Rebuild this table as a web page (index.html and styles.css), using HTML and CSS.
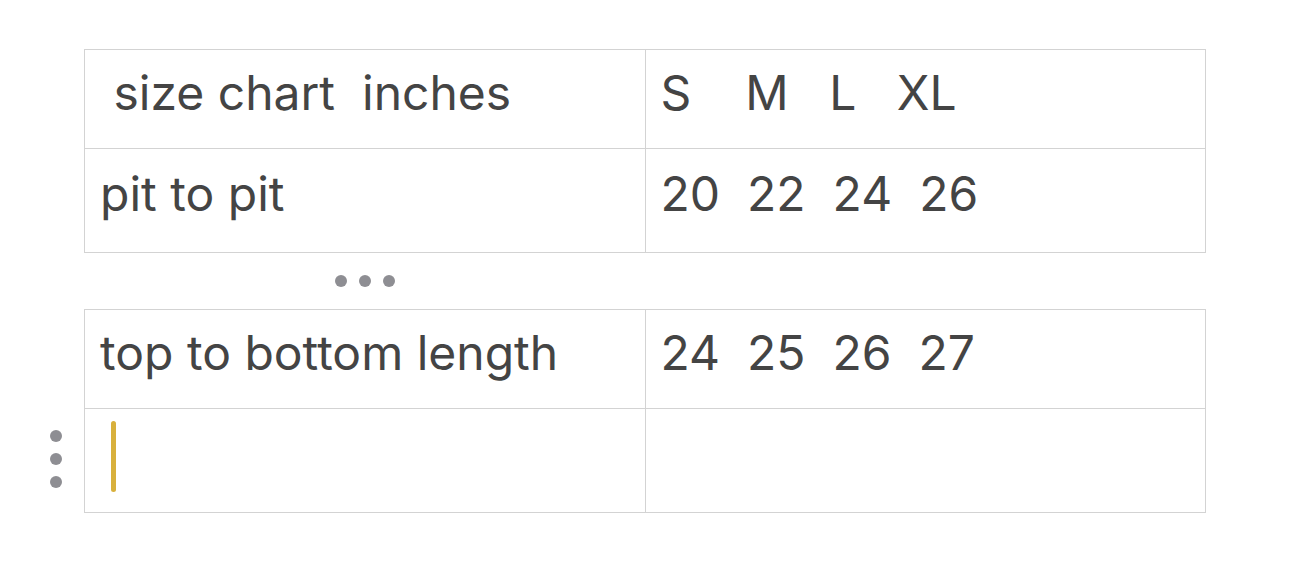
FILE: index.html
```html
<!DOCTYPE html>
<html>
<head>
<meta charset="utf-8">
<link rel="stylesheet" href="styles.css">
</head>
<body>
<main class="page">
  <table class="chart">
    <tr class="row row-a">
      <td class="cell"><span class="txt"> size chart  inches</span></td>
      <td class="cell"><span class="txt">S    M   L   XL</span></td>
    </tr>
    <tr class="row row-b">
      <td class="cell"><span class="txt">pit to pit</span></td>
      <td class="cell"><span class="txt">20  22  24  26</span></td>
    </tr>
  </table>
  <div class="more"><span class="dot"></span><span class="dot"></span><span class="dot"></span></div>
  <table class="chart">
    <tr class="row row-a">
      <td class="cell"><span class="txt">top to bottom length</span></td>
      <td class="cell"><span class="txt">24  25  26  27</span></td>
    </tr>
    <tr class="row row-b">
      <td class="cell cell-active"><span class="handle"><span class="dot"></span><span class="dot"></span><span class="dot"></span></span><span class="caret"></span></td>
      <td class="cell"></td>
    </tr>
  </table>
</main>
</body>
</html>
```

FILE: styles.css
```css
html, body {
  margin: 0;
  background: #ffffff;
}
.page {
  padding: 49px 0 0 84px;
  font-family: Inter, "Noto Sans", sans-serif;
  color: #444444;
}
.chart {
  border-collapse: collapse;
  width: 1122px;
  table-layout: fixed;
}
.cell {
  width: 50%;
  border: 1px solid #d3d3d3;
  font-size: 48px;
  line-height: 60px;
  padding: 13px 0 0 15px;
  vertical-align: top;
  box-sizing: border-box;
}
.txt {
  white-space: pre;
}
.row-a .cell { height: 99px; }
.row-b .cell { height: 104px; padding-top: 15px; }
.more {
  width: 561px;
  height: 56px;
  display: flex;
  justify-content: center;
  align-items: center;
  gap: 12px;
}
.dot {
  width: 12px;
  height: 12px;
  border-radius: 50%;
  background: #8e8e93;
  display: block;
}
.cell-active {
  position: relative;
}
.handle {
  position: absolute;
  left: -35px;
  top: 21px;
  display: flex;
  flex-direction: column;
  gap: 11px;
}
.caret {
  display: block;
  width: 5px;
  height: 71px;
  border-radius: 3px;
  background: #d8b03c;
  margin: -3px 0 0 11px;
}
```
